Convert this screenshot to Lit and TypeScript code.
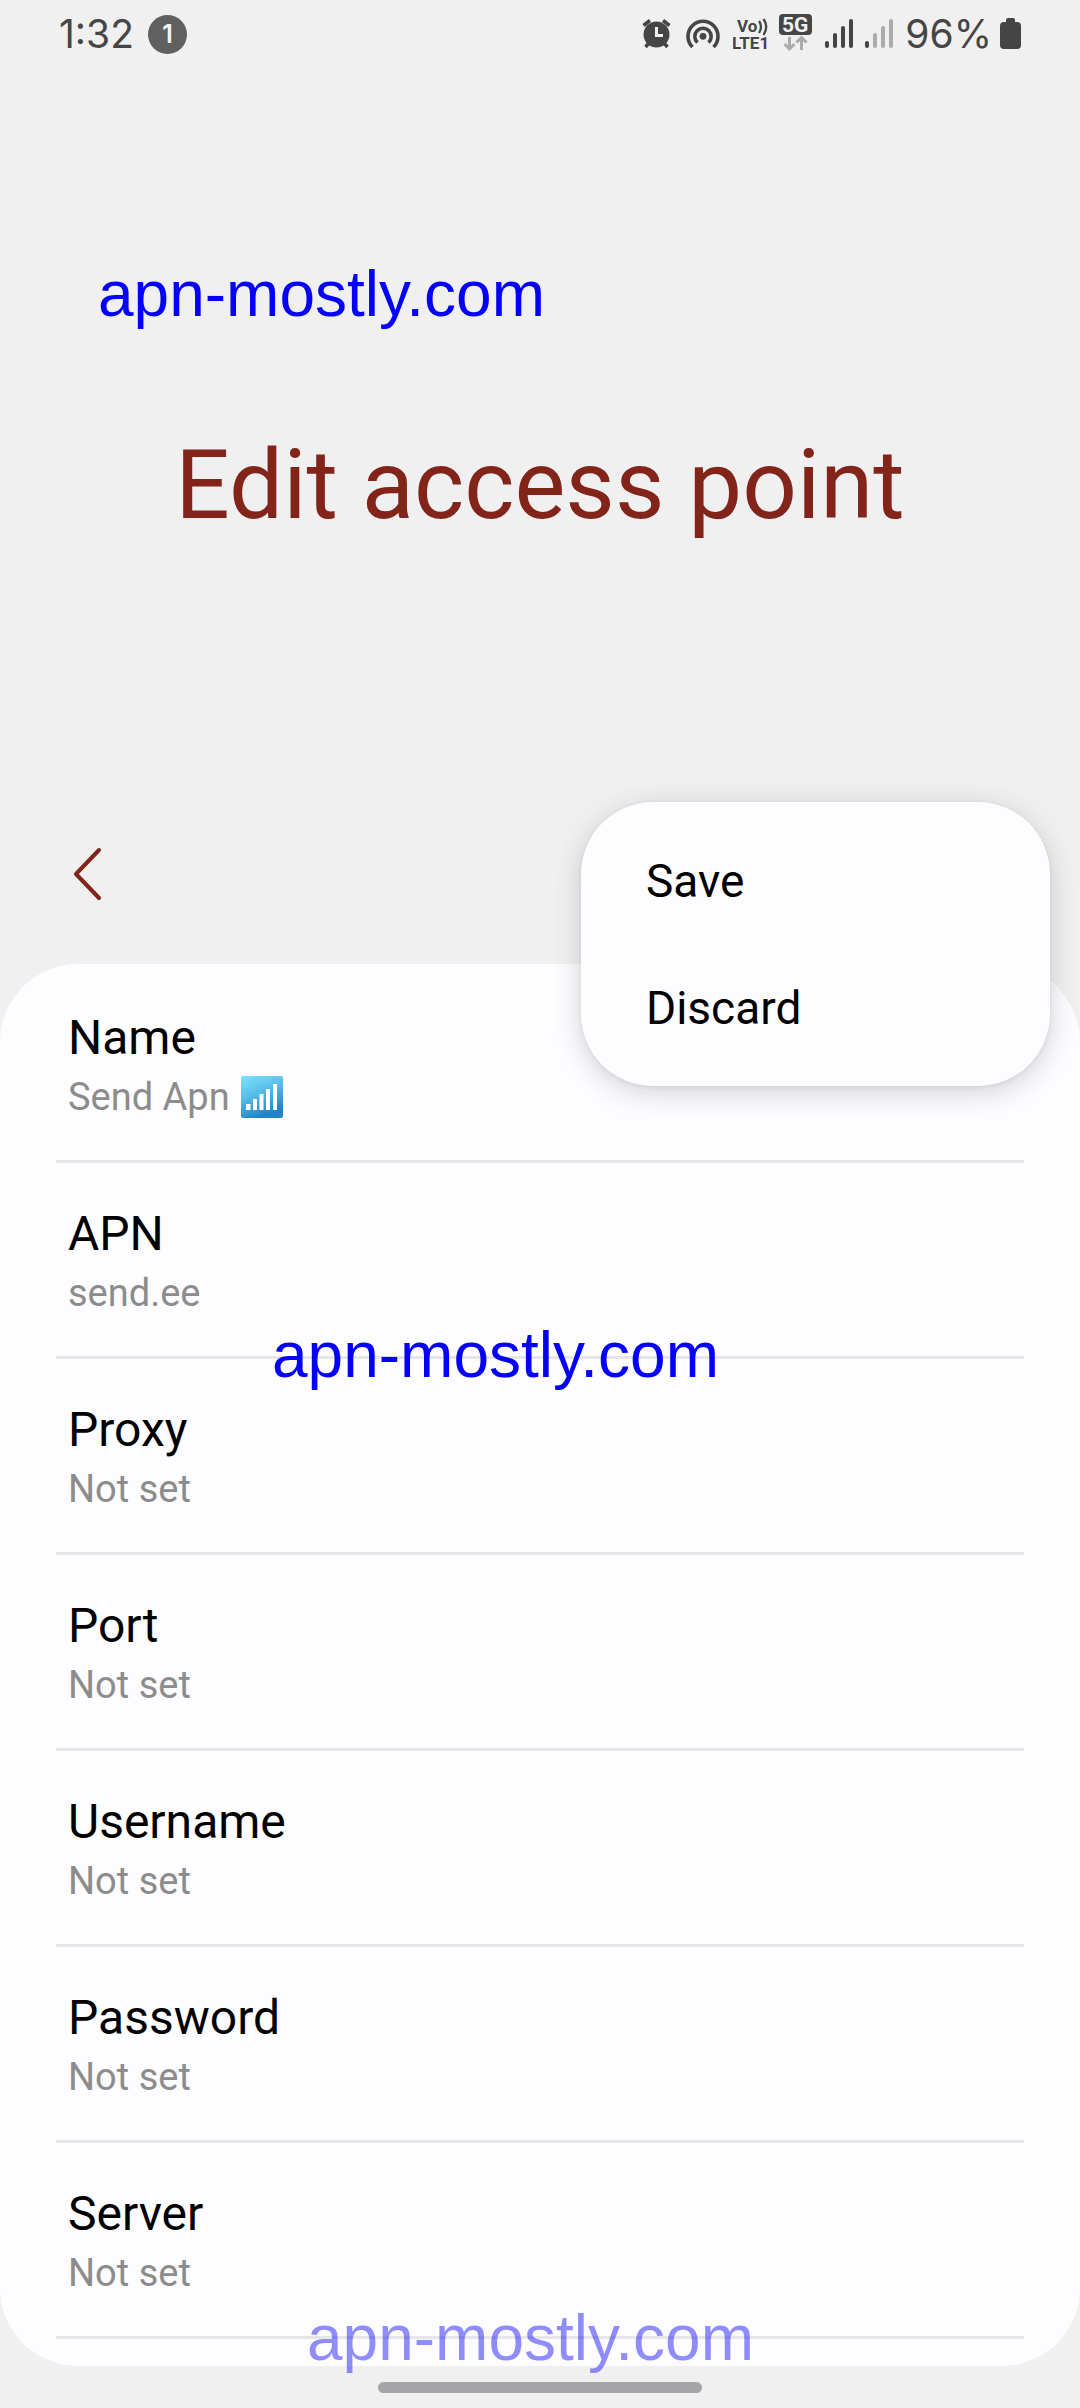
import { LitElement, html, css, svg } from "lit";
import { customElement, property } from "lit/decorators.js";

interface Field {
  label: string;
  value: string;
  signalEmoji?: boolean;
}

const FIELDS: Field[] = [
  { label: "Name", value: "Send Apn", signalEmoji: true },
  { label: "APN", value: "send.ee" },
  { label: "Proxy", value: "Not set" },
  { label: "Port", value: "Not set" },
  { label: "Username", value: "Not set" },
  { label: "Password", value: "Not set" },
  { label: "Server", value: "Not set" },
];

const BARS = [
  { x: 0, y: 41 },
  { x: 8, y: 33 },
  { x: 16, y: 26 },
  { x: 24, y: 19 },
];

@customElement("status-bar")
export class StatusBar extends LitElement {
  static styles = css`
    :host {
      display: flex;
      align-items: center;
      justify-content: space-between;
      height: 68px;
      padding: 0 59px;
      color: #454545;
      font: 400 39px/68px Inter, sans-serif;
    }
    .group {
      display: flex;
      align-items: center;
      gap: 8px;
    }
    .left {
      gap: 14px;
    }
    .badge {
      width: 39px;
      height: 39px;
      border-radius: 50%;
      background: #606060;
      color: #f4f4f4;
      font-size: 25px;
      font-weight: 600;
      line-height: 39px;
      text-align: center;
    }
    svg {
      display: block;
      fill: currentColor;
    }
    .net {
      font-family: Roboto, sans-serif;
      font-weight: 700;
    }
    .vo {
      font-size: 17px;
    }
    .five {
      font-size: 21px;
    }
  `;

  private signal(activeBars: number) {
    return html`<svg width="32" height="68" viewBox="0 0 32 68" aria-hidden="true">
      ${BARS.map(
        (b, i) => svg`<rect x=${b.x} y=${b.y} width="4" height=${48 - b.y} rx="2"
          fill=${i < activeBars ? "#454545" : "#ababab"}></rect>`
      )}
    </svg>`;
  }

  render() {
    return html`
      <div class="group left">
        <span>1:32</span>
        <span class="badge">1</span>
      </div>
      <div class="group">
        <svg width="36" height="68" viewBox="0 0 36 68" aria-hidden="true">
          <path d="M7 43L3.500 47M22 43L25.500 47M1.500 25.500L8 20.500M27.500 25.500L21 20.500" stroke="currentColor" stroke-width="3.500" fill="none"></path>
          <circle cx="14.500" cy="34.500" r="13"></circle>
          <path d="M14.500 27V35.500H21" stroke="#f0f0f0" stroke-width="3" fill="none"></path>
        </svg>
        <svg width="39" height="68" viewBox="0 0 39 68" aria-hidden="true">
          <g fill="none" stroke="currentColor" stroke-width="3.600">
            <path d="M6.500 47A15 15 0 1 1 27.500 47"></path>
            <path d="M11.500 42.500A8.200 8.200 0 1 1 22.500 42.500"></path>
          </g>
          <circle cx="17" cy="36.300" r="3.400"></circle>
        </svg>
        <svg class="net" width="38" height="68" viewBox="0 0 38 68" role="img" aria-label="VoLTE 1">
          <text class="vo" x="4" y="32">Vo</text>
          <path d="M26 21Q30 26.500 26 33M30.500 19Q36 26.500 30.500 35" stroke="currentColor" stroke-width="2.300" fill="none"></path>
          <text class="vo" x="-1" y="49">LTE1</text>
        </svg>
        <svg class="net" width="38" height="68" viewBox="0 0 38 68" role="img" aria-label="5G">
          <rect x="0" y="14" width="33" height="21" rx="4"></rect>
          <text class="five" x="3" y="32" fill="#f0f0f0">5G</text>
          <path d="M10.500 37V48.500M5.500 44L10.500 49L15.500 44M22.500 50V38M17.500 42.500L22.500 37.500L27.500 42.500" stroke="#ababab" stroke-width="3" fill="none"></path>
        </svg>
        ${this.signal(4)} ${this.signal(1)}
        <span>96%</span>
        <svg width="21" height="68" viewBox="0 0 21 68" aria-hidden="true">
          <rect x="6" y="18" width="9" height="8" rx="2"></rect>
          <rect x="0" y="22" width="21" height="27" rx="4"></rect>
        </svg>
      </div>
    `;
  }
}

@customElement("field-row")
export class FieldRow extends LitElement {
  @property({ attribute: false }) field!: Field;

  static styles = css`
    :host {
      display: block;
      border-bottom: 3px solid #e6e5e8;
    }
    .row {
      display: flex;
      flex-direction: column;
      align-items: flex-start;
      gap: 9px;
      width: 100%;
      margin: 0;
      padding: 43px 12px 41px;
      border: 0;
      background: none;
      text-align: left;
      font-family: Roboto, sans-serif;
      cursor: pointer;
    }
    .label {
      color: #000;
      font-size: 48px;
      line-height: 56px;
    }
    .value {
      display: flex;
      align-items: center;
      gap: 11px;
      color: #8c8c8c;
      font-size: 38px;
      line-height: 44px;
    }
    svg {
      display: block;
    }
  `;

  render() {
    return html`
      <button class="row" type="button">
        <span class="label">${this.field.label}</span>
        <span class="value">
          <span>${this.field.value}</span>
          ${this.field.signalEmoji
            ? html`<svg width="42" height="42" viewBox="0 0 42 42" role="img" aria-label="signal bars">
                <defs>
                  <linearGradient id="sky" x1="0" y1="0" x2="0.4" y2="1">
                    <stop offset="0" stop-color="#7fe3fb"></stop>
                    <stop offset="0.500" stop-color="#55bce8"></stop>
                    <stop offset="1" stop-color="#2383c8"></stop>
                  </linearGradient>
                </defs>
                <rect width="42" height="42" rx="2" fill="url(#sky)"></rect>
                <path d="M5 28h4.500v6H5zM12 23h4v11h-4zM18.500 18h4v16h-4zM25 13h4v21h-4zM32 8h4v26h-4z" fill="#fff"></path>
              </svg>`
            : null}
        </span>
      </button>
    `;
  }
}

@customElement("app-root")
export class AppRoot extends LitElement {
  static styles = css`
    :host {
      display: flex;
      flex-direction: column;
      position: relative;
      min-height: 100vh;
      overflow: hidden;
      background: #f1f0f1;
      font-family: Roboto, sans-serif;
    }
    .hero {
      padding: 361px 24px 243px;
    }
    .title {
      margin: 0;
      color: #82241a;
      font-size: 96px;
      font-weight: 400;
      line-height: 112px;
      text-align: center;
    }
    .toolbar {
      display: flex;
      align-items: center;
      position: relative;
      height: 180px;
      padding: 0 47px;
    }
    .back {
      display: grid;
      place-items: center;
      width: 80px;
      height: 80px;
      padding: 0;
      border: 0;
      background: none;
      color: #82241a;
      cursor: pointer;
    }
    .menu {
      position: absolute;
      z-index: 2;
      top: 18px;
      right: 30px;
      display: flex;
      flex-direction: column;
      width: 469px;
      box-sizing: border-box;
      padding: 16px 0 14px;
      border-radius: 72px;
      background: #fdfcfe;
      box-shadow: 0 6px 28px rgba(40, 34, 48, 0.2), 0 1px 4px rgba(40, 34, 48, 0.08);
    }
    .item {
      padding: 0 65px;
      border: 0;
      background: none;
      color: #000;
      font: 400 46px/127px Roboto, sans-serif;
      text-align: left;
      cursor: pointer;
    }
    .card {
      padding: 3px 56px 27px;
      border-radius: 78px;
      background: #fdfcfe;
    }
    .nav {
      display: flex;
      justify-content: center;
      padding: 16px 0 15px;
    }
    .pill {
      width: 30%;
      height: 11px;
      border-radius: 6px;
      background: #a5a5a7;
    }
    .mark {
      position: absolute;
      z-index: 1;
      color: #0500fa;
      font: 400 64px/72px "Liberation Sans", Arial, sans-serif;
      pointer-events: none;
    }
    .mark-top {
      top: 258px;
      left: 98px;
    }
    .mark-middle {
      top: 1319px;
      left: 272px;
    }
    .mark-bottom {
      top: 2302px;
      left: 307px;
      opacity: 0.44;
    }
  `;

  render() {
    return html`
      <status-bar></status-bar>
      <header class="hero"><h1 class="title">Edit access point</h1></header>
      <nav class="toolbar">
        <button class="back" type="button" aria-label="Back">
          <svg width="80" height="80" viewBox="0 0 80 80" fill="none" stroke="currentColor"
            stroke-width="4" stroke-linecap="round" stroke-linejoin="round">
            <path d="M52 16L29 40L52 64"></path>
          </svg>
        </button>
        <div class="menu" role="menu">
          <button class="item" type="button" role="menuitem">Save</button>
          <button class="item" type="button" role="menuitem">Discard</button>
        </div>
      </nav>
      <main class="card">
        ${FIELDS.map((f) => html`<field-row .field=${f}></field-row>`)}
      </main>
      <div class="nav"><div class="pill"></div></div>
      <span class="mark mark-top">apn-mostly.com</span>
      <span class="mark mark-middle">apn-mostly.com</span>
      <span class="mark mark-bottom">apn-mostly.com</span>
    `;
  }
}
